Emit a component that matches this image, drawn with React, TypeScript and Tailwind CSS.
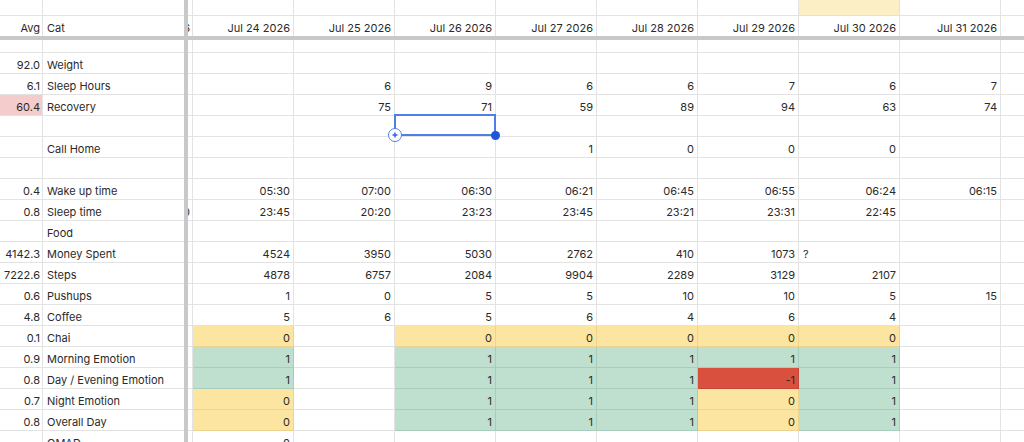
import React from "react";

type C = { t?: string; bg?: "y" | "g" | "r"; left?: boolean };
type Row = { avg?: string; cat?: string; p?: string; pink?: boolean; v?: (string | C)[] };

const y0: C = { t: "0", bg: "y" };
const g1: C = { t: "1", bg: "g" };
const rm: C = { t: "-1", bg: "r" };

const rows: Row[] = [
  { avg: "92.0", cat: "Weight" },
  { avg: "6.1", cat: "Sleep Hours", v: ["", "6", "9", "6", "6", "7", "6", "7"] },
  { avg: "60.4", cat: "Recovery", pink: true, v: ["", "75", "71", "59", "89", "94", "63", "74"] },
  {},
  { cat: "Call Home", v: ["", "", "", "1", "0", "0", "0", ""] },
  {},
  { avg: "0.4", cat: "Wake up time", v: ["05:30", "07:00", "06:30", "06:21", "06:45", "06:55", "06:24", "06:15"] },
  { avg: "0.8", cat: "Sleep time", p: "20:30", v: ["23:45", "20:20", "23:23", "23:45", "23:21", "23:31", "22:45", ""] },
  { cat: "Food" },
  { avg: "4142.3", cat: "Money Spent", v: ["4524", "3950", "5030", "2762", "410", "1073", { t: "?", left: true }, ""] },
  { avg: "7222.6", cat: "Steps", v: ["4878", "6757", "2084", "9904", "2289", "3129", "2107", ""] },
  { avg: "0.6", cat: "Pushups", v: ["1", "0", "5", "5", "10", "10", "5", "15"] },
  { avg: "4.8", cat: "Coffee", v: ["5", "6", "5", "6", "4", "6", "4", ""] },
  { avg: "0.1", cat: "Chai", v: [y0, "", y0, y0, y0, y0, y0, ""] },
  { avg: "0.9", cat: "Morning Emotion", v: [g1, "", g1, g1, g1, g1, g1, ""] },
  { avg: "0.8", cat: "Day / Evening Emotion", v: [g1, "", g1, g1, g1, rm, g1, ""] },
  { avg: "0.7", cat: "Night Emotion", v: [y0, "", g1, g1, g1, y0, g1, ""] },
  { avg: "0.8", cat: "Overall Day", v: [y0, "", g1, g1, g1, y0, g1, ""] },
  { cat: "OMAD", v: ["0", "", "", "", "", "", "", ""] },
];

const dates = ["Jul 24 2026", "Jul 25 2026", "Jul 26 2026", "Jul 27 2026", "Jul 28 2026", "Jul 29 2026", "Jul 30 2026", "Jul 31 2026"];

const bgClass = (bg?: "y" | "g" | "r") =>
  bg === "y"
    ? "bg-[#fce5a0] border-[#ecd38e]"
    : bg === "g"
    ? "bg-[#bfe0cf] border-[#a9cdbb]"
    : bg === "r"
    ? "bg-[#d9503f] border-[#c4473a]"
    : "bg-white border-[#e3e3e3]";

function Frozen({ avg, cat, pink, h }: { avg?: string; cat?: string; pink?: boolean; h: string }) {
  return (
    <>
      <div className={`${h} w-[43px] shrink-0 flex items-center justify-end pr-[2px] pt-[4px] border-r border-b border-[#e3e3e3] ${pink ? "bg-[#f4cccc]" : "bg-white"}`}>
        {avg}
      </div>
      <div className={`${h} w-[141px] shrink-0 flex items-center pl-[4px] pt-[4px] border-b border-[#e3e3e3] whitespace-nowrap overflow-hidden`}>
        {cat}
      </div>
      <div className={`${h} w-[4px] shrink-0 bg-[#c8c8c8]`} />
    </>
  );
}

function Partial({ t, h }: { t?: string; h: string }) {
  return (
    <div className={`${h} w-[5px] shrink-0 flex items-center justify-end pr-[2px] pt-[4px] border-r border-b border-[#e3e3e3] overflow-hidden whitespace-nowrap`}>
      {t}
    </div>
  );
}

function Cell({ c, h }: { c: string | C; h: string }) {
  const cc: C = typeof c === "string" ? { t: c } : c;
  return (
    <div
      className={`${h} w-[101px] shrink-0 flex items-center pt-[4px] ${cc.left ? "justify-start pl-[4px]" : "justify-end pr-[3px]"} border-r border-b ${bgClass(cc.bg)} whitespace-nowrap`}
    >
      {cc.t}
    </div>
  );
}

export default function App() {
  const H = "h-[21px]";
  return (
    <div
      className="relative w-[1024px] h-[442px] overflow-hidden bg-white text-[11px] text-[#2a2a2a]"
      style={{ fontFamily: "Inter, 'Open Sans', sans-serif" }}
    >
      {/* top row */}
      <div className="flex">
        <Frozen h="h-[16px]" />
        <Partial h="h-[16px]" />
        {dates.map((d, i) => (
          <div key={d} className={`h-[16px] w-[101px] shrink-0 border-r border-b ${i === 6 ? "bg-[#fcefc6] border-[#f0e2b6]" : "border-[#e3e3e3]"}`} />
        ))}
        <div className="h-[16px] w-[30px] shrink-0 border-b border-[#e3e3e3]" />
      </div>
      {/* header row */}
      <div className="flex">
        <div className="h-[20px] w-[43px] shrink-0 flex items-center justify-end pr-[2px] pt-[5px] border-r border-[#e3e3e3]">Avg</div>
        <div className="h-[20px] w-[141px] shrink-0 flex items-center pl-[4px] pt-[5px]">Cat</div>
        <div className="h-[20px] w-[4px] shrink-0 bg-[#c8c8c8]" />
        <div className="h-[20px] w-[5px] shrink-0 flex items-center justify-end pr-[2px] pt-[5px] border-r border-[#e3e3e3] overflow-hidden whitespace-nowrap">Jul 23 2026</div>
        {dates.map((d) => (
          <div key={d} className="h-[20px] w-[101px] shrink-0 flex items-center justify-end pr-[3px] pt-[5px] border-r border-[#e3e3e3] whitespace-nowrap">
            {d}
          </div>
        ))}
      </div>
      {/* thick separator */}
      <div className="h-[4px] w-full bg-[#c8c8c8]" />
      {/* partial scrolled row */}
      <div className="flex">
        <Frozen h="h-[13px]" />
        <Partial h="h-[13px]" />
        {dates.map((d) => (
          <Cell key={d} c="" h="h-[13px]" />
        ))}
        <div className="h-[13px] w-[30px] shrink-0 border-b border-[#e3e3e3]" />
      </div>
      {rows.map((r, i) => (
        <div key={i} className="flex">
          <Frozen avg={r.avg} cat={r.cat} pink={r.pink} h={H} />
          <Partial t={r.p} h={H} />
          {(r.v ?? ["", "", "", "", "", "", "", ""]).map((c, j) => (
            <Cell key={j} c={c} h={H} />
          ))}
          <div className={`${H} w-[30px] shrink-0 border-b border-[#e3e3e3]`} />
        </div>
      ))}

      {/* selection overlay */}
      <div className="absolute left-[394px] top-[114px] w-[102px] h-[22px] border-2 border-[#4f7fe6] pointer-events-none" />
      <div className="absolute left-[388px] top-[128px] w-[14px] h-[14px] rounded-full bg-white border-[1.5px] border-[#4f7fe6] flex items-center justify-center">
        <svg width="8" height="8" viewBox="0 0 8 8">
          <path d="M4 0.5 L5 3 L7.5 4 L5 5 L4 7.5 L3 5 L0.5 4 L3 3 Z" fill="#3f6fe0" />
        </svg>
      </div>
      <div className="absolute left-[491px] top-[131px] w-[9px] h-[9px] rounded-full bg-[#1f55d6]" />
    </div>
  );
}
